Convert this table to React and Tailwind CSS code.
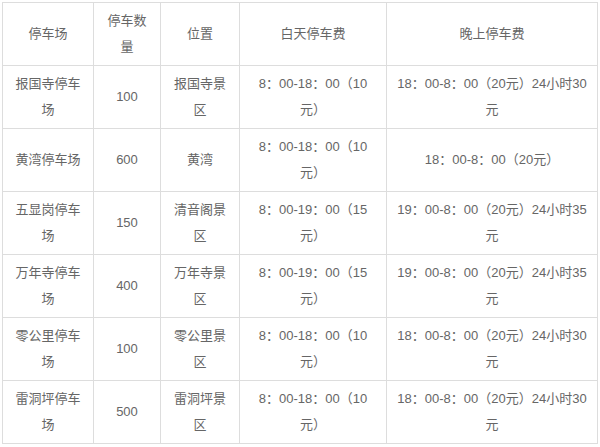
const HEAD = ['停车场', '停车数量', '位置', '白天停车费', '晚上停车费'];

const ROWS = [
  ['报国寺停车场', '100', '报国寺景区', '8：00-18：00（10元）', '18：00-8：00（20元）24小时30元'],
  ['黄湾停车场', '600', '黄湾', '8：00-18：00（10元）', '18：00-8：00（20元）'],
  ['五显岗停车场', '150', '清音阁景区', '8：00-19：00（15元）', '19：00-8：00（20元）24小时35元'],
  ['万年寺停车场', '400', '万年寺景区', '8：00-19：00（15元）', '19：00-8：00（20元）24小时35元'],
  ['零公里停车场', '100', '零公里景区', '8：00-18：00（10元）', '18：00-8：00（20元）24小时30元'],
  ['雷洞坪停车场', '500', '雷洞坪景区', '8：00-18：00（10元）', '18：00-8：00（20元）24小时30元'],
];

const cell = 'h-[63px] border border-[#dddddd] py-0 text-center align-middle';
// day column is padded wider so "元）" wraps like the original
const pad = ['px-[9px]', 'px-[9px]', 'px-[9px]', 'px-[14px]', 'px-[9px]'];

export default function App() {
  return (
    <div className="bg-white p-[2px] w-[600px] h-[447px] text-[13px] leading-[26px] text-[#666666] [font-family:'Liberation_Sans','Noto_Sans_CJK_SC',sans-serif]">
      <table className="table-fixed border-collapse w-[595px]">
        <colgroup>
          <col className="w-[91px]" />
          <col className="w-[67px]" />
          <col className="w-[79px]" />
          <col className="w-[147px]" />
          <col className="w-[211px]" />
        </colgroup>
        <thead>
          <tr>
            {HEAD.map((h, i) => (
              <th key={h} className={`${cell} ${pad[i]} font-normal`}>{h}</th>
            ))}
          </tr>
        </thead>
        <tbody>
          {ROWS.map((row) => (
            <tr key={row[0]}>
              {row.map((v, i) => (
                <td key={i} className={`${cell} ${pad[i]}`}>{v}</td>
              ))}
            </tr>
          ))}
        </tbody>
      </table>
    </div>
  );
}
